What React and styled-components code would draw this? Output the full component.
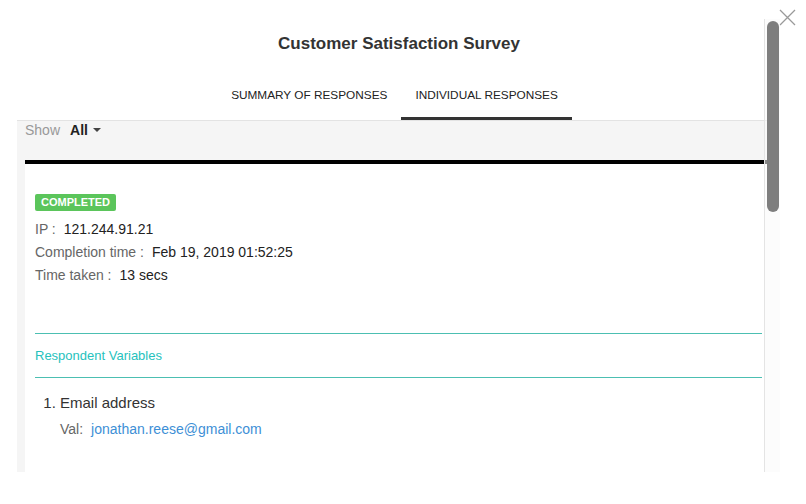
import React from 'react';
import styled, { createGlobalStyle } from 'styled-components';

const GlobalStyle = createGlobalStyle`
  html, body {
    margin: 0;
    padding: 0;
    background: #ffffff;
  }
  body {
    font-family: "Liberation Sans", Arial, Helvetica, sans-serif;
    color: #333333;
  }
`;

const StyledModal = styled.div`
  position: relative;
  width: 806px;
  height: 504px;
  padding: 19px 26px 32px 17px;
  box-sizing: border-box;
`;

const CloseButton = styled.button`
  position: absolute;
  top: 9px;
  right: 10px;
  width: 17px;
  height: 17px;
  padding: 0;
  border: 0;
  background: transparent;
  cursor: pointer;

  svg {
    display: block;
  }
`;

const ScrollArea = styled.div`
  position: relative;
  height: 453px;
  overflow: hidden;
`;

const ScrollTrack = styled.div`
  position: absolute;
  top: 0;
  right: 0;
  bottom: 0;
  width: 15px;
  border-left: 1px solid #e4e4e4;
  background: rgba(250, 250, 250, 0.55);

  .thumb {
    position: absolute;
    top: 2px;
    left: 2px;
    width: 12px;
    height: 191px;
    border-radius: 6px;
    background: #7e7e7e;
  }
`;

const Content = styled.div`
  margin-right: 8px;
`;

const Header = styled.header`
  padding-top: 15px;
  text-align: center;

  h1 {
    margin: 0;
    padding-left: 9px;
    font-size: 17px;
    line-height: 20px;
    font-weight: 700;
    color: #333333;
  }
`;

const Tabs = styled.nav`
  display: flex;
  justify-content: center;
  margin-top: 19px;
`;

const Tab = styled.button`
  padding: 14px 14px 14px;
  border: 0;
  border-bottom: 3px solid ${({ active }) => (active ? '#333333' : 'transparent')};
  background: transparent;
  font-family: inherit;
  font-size: 11.8px;
  line-height: 16px;
  color: #222222;
  text-transform: uppercase;
  cursor: pointer;
`;

const ResponsesSection = styled.section`
  padding-left: 8px;
  border-top: 1px solid #e3e3e3;
  background: #f5f5f5;
`;

const FilterBar = styled.div`
  display: flex;
  align-items: flex-start;
  gap: 10px;
  height: 39px;
  font-size: 14px;
  line-height: 18px;

  .label {
    color: #999999;
  }

  .value {
    display: flex;
    align-items: center;
    gap: 5px;
    font-weight: 700;
    color: #222222;
  }
`;

const Caret = styled.span`
  width: 0;
  height: 0;
  border-left: 4px solid transparent;
  border-right: 4px solid transparent;
  border-top: 4px solid #444444;
`;

const ResponseCard = styled.article`
  min-height: 420px;
  padding: 28px 10px 0;
  border-top: 4px solid #000000;
  background: #ffffff;
`;

const StatusBadge = styled.span`
  display: inline-block;
  padding: 2px 6px;
  border-radius: 2px;
  background: #5bc55b;
  color: #ffffff;
  font-size: 11px;
  line-height: 13px;
  font-weight: 700;
  text-transform: uppercase;
`;

const MetaList = styled.dl`
  margin: 7px 0 0;
  font-size: 14px;
  line-height: 23px;

  div {
    display: flex;
    gap: 8px;
  }

  dt {
    color: #666666;
  }

  dd {
    margin: 0;
    color: #222222;
  }
`;

const SectionTitle = styled.h3`
  margin: 46px 0 0;
  padding: 12px 0 12px;
  border-top: 1px solid #4cbfb2;
  border-bottom: 1px solid #4cbfb2;
  color: #26c2bd;
  font-size: 13px;
  line-height: 19px;
  font-weight: 400;
`;

const Variables = styled.ol`
  margin: 15px 0 0;
  padding-left: 25px;
  font-size: 15px;
  line-height: 20px;
  color: #333333;
`;

const VariableValue = styled.div`
  display: flex;
  gap: 8px;
  margin-top: 6px;
  font-size: 14px;
  line-height: 20px;

  .label {
    color: #666666;
  }

  a {
    color: #3d8fd6;
    text-decoration: none;
  }
`;

const meta = [
  { label: 'IP :', value: '121.244.91.21' },
  { label: 'Completion time :', value: 'Feb 19, 2019 01:52:25' },
  { label: 'Time taken :', value: '13 secs' },
];

const App = () => (
  <>
    <GlobalStyle />
    <StyledModal>
      <CloseButton aria-label="Close">
        <svg width="17" height="17" viewBox="0 0 17 17">
          <path d="M1 1L16 16M16 1L1 16" stroke="#9a9a9a" strokeWidth="1.3" fill="none" />
        </svg>
      </CloseButton>

      <ScrollArea>
        <Content>
          <Header>
            <h1>Customer Satisfaction Survey</h1>
            <Tabs>
              <Tab>Summary of Responses</Tab>
              <Tab active>Individual Responses</Tab>
            </Tabs>
          </Header>

          <ResponsesSection>
            <FilterBar>
              <span className="label">Show</span>
              <span className="value">
                All <Caret />
              </span>
            </FilterBar>

            <ResponseCard>
              <StatusBadge>Completed</StatusBadge>
              <MetaList>
                {meta.map((item) => (
                  <div key={item.label}>
                    <dt>{item.label}</dt>
                    <dd>{item.value}</dd>
                  </div>
                ))}
              </MetaList>

              <SectionTitle>Respondent Variables</SectionTitle>

              <Variables>
                <li>
                  Email address
                  <VariableValue>
                    <span className="label">Val:</span>
                    <a href="mailto:jonathan.reese@gmail.com">jonathan.reese@gmail.com</a>
                  </VariableValue>
                </li>
              </Variables>
            </ResponseCard>
          </ResponsesSection>
        </Content>

        <ScrollTrack>
          <div className="thumb" />
        </ScrollTrack>
      </ScrollArea>
    </StyledModal>
  </>
);

export default App;
